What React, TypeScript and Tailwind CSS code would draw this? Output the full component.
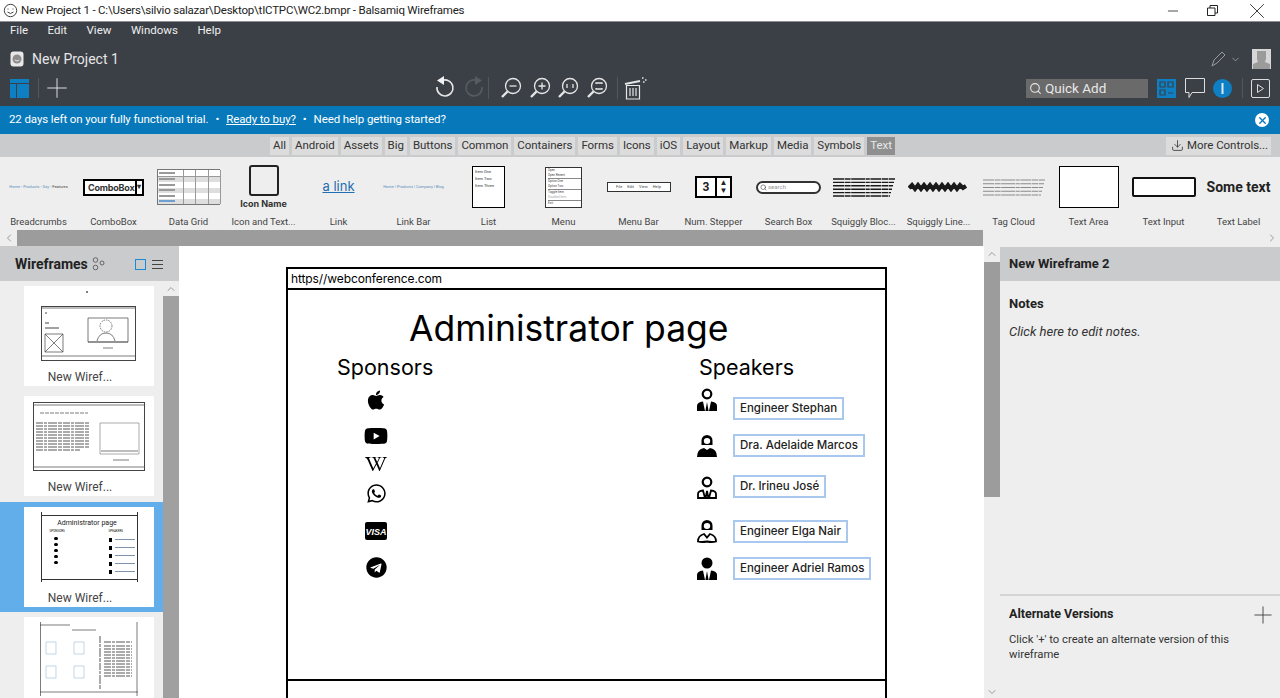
import React from 'react';
import { FaApple, FaYoutube, FaWikipediaW, FaWhatsapp, FaTelegram } from 'react-icons/fa';
import { ChevronLeft, ChevronRight, ChevronUp, ChevronDown, Download, Search, X, Minus, Plus } from 'lucide-react';

const menus = ['File', 'Edit', 'View', 'Windows', 'Help'];
const tabs = ['All', 'Android', 'Assets', 'Big', 'Buttons', 'Common', 'Containers', 'Forms', 'Icons', 'iOS', 'Layout', 'Markup', 'Media', 'Symbols'];

const Magnifier: React.FC<{ mark: React.ReactNode }> = ({ mark }) => (
  <svg width="22" height="22" viewBox="0 0 22 22" fill="none" stroke="#e6e6e6" strokeWidth="1.3">
    <circle cx="13" cy="9" r="7.5" />
    <path d="M7.5 14.5 2 20" strokeWidth="2.4" />
    {mark}
  </svg>
);

const Bars: React.FC<{ rows: number; w: number; h: number; color?: string; width?: number }> = ({ rows, w, h, color = '#555', width = 1.2 }) => (
  <svg width={w} height={h}>
    {Array.from({ length: rows }).map((_, i) => (
      <line key={i} x1="0" x2={w - (i * 13) % 12} y1={1 + (i * (h - 2)) / Math.max(rows - 1, 1)} y2={1 + (i * (h - 2)) / Math.max(rows - 1, 1)} stroke={color} strokeWidth={width} strokeDasharray="11 .6 6 .6 14 .6 4 .6" />
    ))}
  </svg>
);

const library: { label: string; preview: React.ReactNode }[] = [
  { label: 'Breadcrumbs', preview: <span className="text-[4px] text-[#5b8fc0] whitespace-nowrap">Home › Products › Xay › <span className="text-[#444]">Features</span></span> },
  {
    label: 'ComboBox',
    preview: (
      <div className="flex h-[17px] w-[61px] items-center border-2 border-black bg-white text-[9px] font-bold text-[#333]">
        <span className="flex-1 pl-[3px] leading-none [font-family:Inter,sans-serif] tracking-[-.2px]">ComboBox</span>
        <span className="flex h-full w-[11px] items-center justify-center border-l-2 border-black text-[8px]">▾</span>
      </div>
    ),
  },
  {
    label: 'Data Grid',
    preview: (
      <div className="grid h-[36px] w-[63px] grid-cols-[26px_12px_13px_12px] border border-[#777] bg-[#f8f8f8]">
        {Array.from({ length: 24 }).map((_, i) => (
          <div key={i} className={`flex items-center border-r border-[#999] ${i < 4 ? 'border-b' : ''} ${i % 8 < 4 ? 'bg-white' : 'bg-[#dedede]'}`}>
            {i % 4 === 0 && <span className={`ml-px h-[2px] w-[16px] ${i === 20 ? 'bg-[#6f9fce]' : 'bg-[#999]'}`} />}
          </div>
        ))}
      </div>
    ),
  },
  {
    label: 'Icon and Text...',
    preview: (
      <div className="flex flex-col items-center">
        <div className="h-[31px] w-[30px] rounded-[3px] border-2 border-[#222] bg-[#eeeeee]" />
        <span className="mt-[3px] text-[9px] leading-[10px] font-bold text-[#333] [font-family:Inter,sans-serif]">Icon Name</span>
      </div>
    ),
  },
  { label: 'Link', preview: <span className="text-[13px] text-[#1f6fb2] underline [font-family:Inter,sans-serif]">a link</span> },
  { label: 'Link Bar', preview: <span className="text-[4px] text-[#5b8fc0] whitespace-nowrap">Home | Products | Company | Blog</span> },
  {
    label: 'List',
    preview: (
      <div className="h-[42px] w-[33px] border border-black bg-white pl-[2px] pt-[1px] text-[4px] leading-[7px] text-[#333]">
        <div>Item One</div>
        <div>Item Two</div>
        <div>Item Three</div>
      </div>
    ),
  },
  {
    label: 'Menu',
    preview: (
      <div className="h-[41px] w-[37px] border border-[#333] bg-white pl-[2px] text-[3px] leading-[5px] text-[#444]">
        <div>Open</div>
        <div>Open Recent</div>
        <div className="border-t border-[#888]">Option One</div>
        <div>Option Two</div>
        <div className="border-t border-[#888]">Toggle Item</div>
        <div className="text-[#aaa]">Disabled Item</div>
        <div className="border-t border-[#888]">Exit</div>
      </div>
    ),
  },
  {
    label: 'Menu Bar',
    preview: (
      <div className="flex h-[10px] w-[64px] items-center justify-center gap-[5px] border border-[#333] bg-white text-[4px] text-[#444]">
        <span>File</span><span>Edit</span><span>View</span><span>Help</span>
      </div>
    ),
  },
  {
    label: 'Num. Stepper',
    preview: (
      <div className="flex h-[22px] w-[37px] items-center border-2 border-black bg-white text-[#222]">
        <span className="flex-1 text-center text-[12px] leading-none font-bold">3</span>
        <span className="flex h-full w-[15px] flex-col items-center justify-center border-l-2 border-black text-[8px] leading-[8px]">
          <span>▲</span><span>▼</span>
        </span>
      </div>
    ),
  },
  {
    label: 'Search Box',
    preview: (
      <div className="flex h-[13px] w-[65px] items-center rounded-full border-2 border-[#333] bg-white pl-[2px] text-[6px] text-[#999]">
        <Search size={7} strokeWidth={2} className="text-[#444]" />
        <span className="ml-[1px] leading-none">search</span>
      </div>
    ),
  },
  { label: 'Squiggly Bloc...', preview: <Bars rows={6} w={62} h={19} color="#1a1a1a" width={1.4} /> },
  {
    label: 'Squiggly Line...',
    preview: (
      <svg width="62" height="10" viewBox="0 0 62 10" fill="none" stroke="#1a1a1a">
        <path d="M1 6 4 3l3 4 3-4 3 4 3-4 3 4 3-4 3 4 3-4 3 4 3-4 3 4 3-4 3 4 3-4 3 4 3-4 3 3 3-2" strokeWidth="4" />
      </svg>
    ),
  },
  { label: 'Tag Cloud', preview: <Bars rows={5} w={62} h={17} color="#8a8a8a" width={1.1} /> },
  { label: 'Text Area', preview: <div className="h-[42px] w-[60px] border border-black bg-white" /> },
  { label: 'Text Input', preview: <div className="h-[20px] w-[64px] rounded-[2px] border-2 border-[#111] bg-white" /> },
  { label: 'Text Label', preview: <span className="text-[14px] font-bold text-[#222] whitespace-nowrap">Some text</span> },
];

const Thumb: React.FC<{ selected?: boolean; children: React.ReactNode; label?: boolean }> = ({ selected, children, label = true }) => (
  <div className={`${selected ? 'bg-[#62aeea] py-[5px]' : ''}`}>
    <div className="ml-[24px] flex h-[100px] w-[130px] flex-col items-center bg-white">
      <div className="flex h-[83px] w-full justify-center">{children}</div>
      {label && <span className="pr-[18px] text-[12px] leading-[16px] text-[#444]">New Wiref...</span>}
    </div>
  </div>
);

const speakerIcon = (head: 'ring' | 'solid' | 'hair' | 'hairOpen', body: 'tie' | 'tieOpen' | 'round' | 'roundOpen') => (
  <svg width="20" height="24" viewBox="0 0 20 24">
    {head === 'hair' || head === 'hairOpen' ? (
      <path d="M4.5 11V6.5a5.5 5.5 0 0 1 11 0V11z" fill="#000" />
    ) : (
      <circle cx="10" cy="6" r={head === 'solid' ? 5.5 : 4.3} fill={head === 'solid' ? '#000' : '#fff'} stroke="#000" strokeWidth={head === 'solid' ? 0 : 2.2} />
    )}
    {(head === 'hair' || head === 'hairOpen') && <ellipse cx="10" cy="7" rx="3.2" ry="3" fill="#fff" />}
    {body === 'tie' && <path d="M0 23v-5q0-4 6-4.5L8 23zM20 23v-5q0-4-6-4.5L12 23zM10 14l1.6 9H8.4z" fill="#000" />}
    {body === 'tieOpen' && <path d="M1 22v-4q0-3 5-3.5L8 22zM19 22v-4q0-3-5-3.5L12 22zM10 15l1.4 7H8.6z" fill="#fff" stroke="#000" strokeWidth="1.8" />}
    {body === 'round' && <path d="M0 23q0-8 7-9l3 2 3-2q7 1 7 9z" fill="#000" />}
    {body === 'roundOpen' && <path d="M1 22.5q0-6 6-7.5l3 3.5 3-3.5q6 1.5 6 7.5q-4 1-9 0q-5 1-9 0z" fill="#fff" stroke="#000" strokeWidth="1.8" />}
  </svg>
);

const speakers = [
  { name: 'Engineer Stephan', icon: speakerIcon('ring', 'tie'), row: 'mt-[7px]', icn: '', box: 'mt-[9px]' },
  { name: 'Dra. Adelaide Marcos', icon: speakerIcon('hair', 'round'), row: 'mt-[14px]', icn: '', box: '' },
  { name: 'Dr. Irineu José', icon: speakerIcon('ring', 'tieOpen'), row: 'mt-[18px]', icn: 'mt-px', box: '' },
  { name: 'Engineer Elga Nair', icon: speakerIcon('hairOpen', 'roundOpen'), row: 'mt-[20px]', icn: '', box: 'mt-px' },
  { name: 'Engineer Adriel Ramos', icon: speakerIcon('solid', 'tie'), row: 'mt-[14px]', icn: '', box: '' },
];

export default function App() {
  return (
    <div className="flex h-[698px] w-[1280px] flex-col overflow-hidden bg-white [font-family:Roboto,sans-serif]">
      {/* title bar */}
      <div className="flex h-[22px] shrink-0 items-center border-b border-[#8f8f8f] pl-[3px] text-[11.5px] tracking-[-.2px] text-[#222]">
        <svg width="15" height="15" viewBox="0 0 15 15" fill="none" stroke="#444" className="mr-[3px]">
          <circle cx="7.5" cy="7.5" r="6.2" />
          <path d="M4.5 9q3 3 6 0M5 5.5v1M10 5.5v1" />
        </svg>
        <span>New Project 1 - C:\Users\silvio salazar\Desktop\tICTPC\WC2.bmpr - Balsamiq Wireframes</span>
        <div className="ml-auto flex items-center text-[#222]">
          <Minus size={16} strokeWidth={1.2} className="mr-[26px]" />
          <svg width="11" height="11" viewBox="0 0 11 11" fill="none" stroke="#222" className="mr-[26px]">
            <path d="M.5 3h7.5v7.5H.5zM3 3V.5h7.5V8H8" />
          </svg>
          <X size={26} strokeWidth={.8} className="mr-[10px]" />
        </div>
      </div>

      {/* dark header */}
      <div className="flex h-[84px] shrink-0 flex-col bg-[#3b4046] text-[#eeeeee]">
        <div className="flex h-[18px] items-center gap-[19.5px] pl-[10px] text-[11.5px]">
          {menus.map(m => <span key={m}>{m}</span>)}
        </div>
        <div className="mt-[9px] flex h-[20px] items-center pl-[10px] pr-[9px]">
          <svg width="14" height="16" viewBox="0 0 14 16" className="mr-[8px]">
            <rect x="0.5" y="0.5" width="13" height="15" rx="3" fill="#e8e8e8" />
            <circle cx="7" cy="8" r="4.5" fill="#8d8d8d" />
            <path d="M4.8 9q2.2 2 4.4 0" stroke="#e8e8e8" fill="none" />
          </svg>
          <span className="text-[14px] text-[#e6e6e6]">New Project 1</span>
          <svg width="18" height="18" viewBox="0 0 18 18" fill="none" stroke="#9a9a9a" className="ml-auto">
            <path d="M2 16l2-6 8-8 3 3-8 8z" />
          </svg>
          <ChevronDown size={11} className="ml-[2px] mr-[11px] text-[#9a9a9a]" />
          <svg width="19" height="20" viewBox="0 0 19 20">
            <rect width="19" height="20" fill="#d6d6d6" />
            <path d="M5 2h9v8l-1 3 5 2v5H1v-5l5-2-1-3z" fill="#9b9b9b" />
          </svg>
        </div>
        <div className="mt-[2px] flex h-[34px] items-center pl-[10px]">
          <svg width="19" height="19" viewBox="0 0 19 19">
            <rect width="19" height="19" fill="#0f7fc4" />
            <path d="M0 4.5h19M6.5 4.5V19" stroke="#3b4046" strokeWidth="1" />
          </svg>
          <span className="ml-[9px] h-[20px] w-px bg-[#52575c]" />
          <Plus size={32} strokeWidth={.75} className="ml-[2px] text-[#dddddd]" />
          <svg width="22" height="24" viewBox="0 0 22 24" fill="none" stroke="#e6e6e6" strokeWidth="1.6" className="ml-[361px]">
            <path d="M8 4.5a8 8 0 1 1-5 6.5" />
            <path d="M10 0v9L3 4.5z" fill="#f2f2f2" stroke="none" />
          </svg>
          <svg width="22" height="24" viewBox="0 0 22 24" fill="none" stroke="#565b60" strokeWidth="1.6" className="ml-[7px]">
            <path d="M14 4.5a8 8 0 1 0 5 6.5" />
            <path d="M12 0v9l7-4.5z" fill="#565b60" stroke="none" />
          </svg>
          <span className="ml-[3px] h-[22px] w-px bg-[#52575c]" />
          <span className="ml-[11px]"><Magnifier mark={<path d="M9.5 9h7" />} /></span>
          <span className="ml-[7px]"><Magnifier mark={<path d="M9.5 9h7M13 5.5v7" />} /></span>
          <span className="ml-[6px]"><Magnifier mark={<path d="M10 11V7M13 8.5h.1M13 10.5h.1M16 11V7" />} /></span>
          <span className="ml-[7px]"><Magnifier mark={<path d="M10 7V6h6v1M10 11v1h6v-1" />} /></span>
          <span className="ml-[9px] h-[22px] w-px bg-[#52575c]" />
          <svg width="24" height="24" viewBox="0 0 24 24" fill="none" stroke="#e6e6e6" strokeWidth="1.2" className="ml-[5px]">
            <path d="M2 8 17 5" strokeWidth="2.2" />
            <path d="M3.5 9.5h13V23h-13zM7 12v8M10 12v8M13 12v8" />
            <path d="M19 2h1.5M22 4h1.5M20 6h1.5" strokeWidth="1.4" />
          </svg>
          <div className="ml-auto flex items-center pr-[10px]">
            <div className="flex h-[19px] w-[122px] items-center bg-[#6a6a6a] pl-[3px] text-[13.5px] text-[#e8e8e8]">
              <Search size={13} strokeWidth={2} className="mr-[3px]" />
              Quick Add
            </div>
            <svg width="19" height="19" viewBox="0 0 19 19" className="ml-[9px]">
              <rect width="19" height="19" fill="#0f7fc4" />
              <path d="M3 3h5v5H3zM11 3h5v5h-5zM3 11h5v5H3zM11 14h5" fill="none" stroke="#3b4046" strokeWidth="1.2" />
            </svg>
            <svg width="20" height="20" viewBox="0 0 20 20" fill="none" stroke="#dddddd" className="ml-[9px]">
              <path d="M.5.5h19v14H7l-3 5v-5H.5z" />
            </svg>
            <svg width="19" height="19" viewBox="0 0 19 19" className="ml-[8px]">
              <circle cx="9.5" cy="9.5" r="9.5" fill="#0f7fc4" />
              <rect x="8.5" y="4" width="2" height="11" fill="#dbeaf5" />
            </svg>
            <span className="ml-[10px] h-[20px] w-px bg-[#52575c]" />
            <svg width="19" height="19" viewBox="0 0 19 19" fill="none" stroke="#dddddd" className="ml-[8px]">
              <rect x=".5" y=".5" width="18" height="18" rx="1.5" />
              <path d="M6.5 5.5v8l6-4z" />
            </svg>
          </div>
        </div>
      </div>

      {/* trial banner */}
      <div className="flex h-[28px] shrink-0 items-center bg-[#0779bb] pl-[9px] pr-[11px] text-[11.5px] tracking-[-.1px] text-white">
        <span>22 days left on your fully functional trial.</span>
        <span className="mx-[7px]">•</span>
        <span className="underline">Ready to buy?</span>
        <span className="mx-[7px]">•</span>
        <span>Need help getting started?</span>
        <div className="ml-auto flex h-[14px] w-[14px] items-center justify-center rounded-full bg-white">
          <X size={11} strokeWidth={3} className="text-[#0779bb]" />
        </div>
      </div>

      {/* filter tabs */}
      <div className="flex h-[23px] shrink-0 items-center bg-[#c9cbcc] pl-[270px] pr-[9px] text-[11.5px] tracking-[-.04px] text-[#333]">
        <div className="flex gap-[3px]">
          {tabs.map(t => (
            <span key={t} className="flex h-[18px] items-center bg-[#dcdcdc] px-[3px]">{t}</span>
          ))}
          <span className="flex h-[18px] items-center bg-[#8f8f8f] px-[3px] text-[#e8e8e8]">Text</span>
        </div>
        <div className="ml-auto flex h-[18px] w-[105px] items-center bg-[#dcdcdc] pl-[5px] text-[#333] whitespace-nowrap">
          <Download size={13} strokeWidth={1.5} className="mr-[3px] shrink-0" />
          More Controls...
        </div>
      </div>

      {/* UI library strip */}
      <div className="grid h-[73px] shrink-0 grid-cols-[repeat(17,75px)] bg-[#eeeeee] pl-px">
        {library.map(item => (
          <div key={item.label} className="flex flex-col items-center">
            <div className="flex h-[57px] items-center justify-center pt-[3px]">{item.preview}</div>
            <span className="mt-px text-[9.5px] leading-[14px] whitespace-nowrap text-[#444]">{item.label}</span>
          </div>
        ))}
      </div>

      {/* horizontal scrollbar */}
      <div className="flex h-[16px] shrink-0 items-center bg-[#eeeeee]">
        <ChevronLeft size={12} className="ml-[3px] mr-[2px] text-[#9a9a9a]" />
        <div className="h-full w-[966px] bg-[#9c9c9c]" />
        <ChevronRight size={12} className="ml-auto mr-[2px] text-[#9a9a9a]" />
      </div>

      {/* workspace */}
      <div className="flex min-h-0 flex-1">
        {/* wireframes panel */}
        <div className="flex w-[179px] shrink-0 flex-col">
          <div className="flex h-[35px] shrink-0 items-center bg-[#c9cbcc] pl-[15px] pt-px text-[#222]">
            <span className="w-[72px] text-[14px] font-bold whitespace-nowrap">Wireframes</span>
            <svg width="14" height="14" viewBox="0 0 14 14" fill="none" stroke="#666" className="ml-[5px]">
              <circle cx="3.5" cy="3" r="2.3" /><circle cx="3.5" cy="10.5" r="2.3" /><circle cx="10" cy="6" r="2" />
            </svg>
            <span className="ml-[29px] h-[11px] w-[11px] border border-[#1a8ad4]" />
            <div className="ml-[6px] flex w-[11px] flex-col gap-[3px]">
              <span className="h-px bg-[#444]" /><span className="h-px bg-[#444]" /><span className="h-px bg-[#444]" />
            </div>
          </div>
          <div className="flex min-h-0 flex-1">
            <div className="flex w-[163px] flex-col overflow-hidden bg-[#eeeeee] pt-[5px]">
              <Thumb>
                <svg width="96" height="76" viewBox="0 -20 96 76" fill="none" stroke="#444" strokeWidth=".7">
                  <circle cx="46" cy="-14" r="1" fill="#555" stroke="none" />
                  <rect x=".5" y=".5" width="94" height="54" strokeWidth="1" />
                  <path d="M0 2h94M0 50h94M4 28h18v18H4zM4 28l18 18M22 28 4 46M47 12h40v24H47z" />
                  <path d="M4 7h2M4 17h4M4 22h14" strokeWidth="1" />
                  <circle cx="65" cy="20" r="6" strokeDasharray="1.5 1" />
                  <path d="M56 35q2-8 9-8t9 8M47 36h40M62 42h10" />
                </svg>
              </Thumb>
              <div className="mt-[10px]">
                <Thumb>
                  <svg width="112" height="70" viewBox="0 0 112 70" fill="none" stroke="#444" strokeWidth=".7" className="mt-[6px]">
                    <rect x=".5" y=".5" width="111" height="68" strokeWidth="1" />
                    <path d="M0 3h112M0 65h112" />
                    <path d="M7 11h48" strokeDasharray="4 1" />
                    <path d="M3 21h54M3 24h54M3 27h54M3 30h54M3 33h54M3 36h54M3 39h54M3 42h54M3 45h54M3 48h44" strokeDasharray="7 1 3 1 9 1 4 1" strokeWidth=".9" />
                    <path d="M67 21h39v31H67z" stroke="#888" />
                    <path d="M68 49h37M80 58h16" />
                  </svg>
                </Thumb>
              </div>
              <div className="mt-[6px]">
                <Thumb selected>
                  <div className="mt-[5px] flex h-[70px] w-[97px] flex-col border-x border-[#333]">
                    <div className="mt-[3px] h-px bg-[#333]" />
                    <div className="mt-[3px] pr-[4px] text-center text-[7px] leading-[9px] text-[#222]">Administrator page</div>
                    <div className="mt-[1px] flex justify-between pl-[8px] pr-[2px]">
                      <div className="flex flex-col gap-[3px] text-[3px]">
                        <span>SPONSORS</span>
                        {[0, 1, 2, 3, 4].map(i => <span key={i} className="ml-[4px] h-[3px] w-[4px] rounded-full bg-black" />)}
                      </div>
                      <div className="flex flex-col gap-[4px] text-[3px]">
                        <span>SPEAKERS</span>
                        {[0, 1, 2, 3, 4].map(i => <span key={i} className="flex items-center gap-[3px]"><span className="h-[4px] w-[3px] bg-black" /><span className="h-px w-[20px] bg-[#7f93ad]" /></span>)}
                      </div>
                    </div>
                    <div className="mt-auto mb-[2px] h-px bg-[#333]" />
                  </div>
                </Thumb>
              </div>
              <div className="mt-[5px]">
                <Thumb label={false}>
                  <svg width="98" height="76" viewBox="0 0 98 76" fill="none" stroke="#444" strokeWidth=".7" className="mt-[5px]">
                    <path d="M.5 0v74M97 0v74M0 3h30M0 70h98M32 8h24" />
                    <path d="M6 20h10v12H6zM34 20h10v12H34zM6 44h10v12H6zM34 44h10v12H34z" stroke="#a9c4de" />
                    <path d="M60 14v54M64 20h28M64 24h28M64 27h28M64 30h28M64 33h28M64 36h28M64 39h28M64 42h28M64 45h28M64 48h28M64 51h28M64 54h28" strokeDasharray="7 1 3 1 9 1 4 1" strokeWidth=".9" />
                  </svg>
                </Thumb>
              </div>
            </div>
            <div className="flex w-[16px] shrink-0 flex-col items-center bg-[#a0a0a0]">
              <div className="flex h-[15px] w-full items-center justify-center bg-[#eeeeee]">
                <ChevronUp size={12} className="text-[#9a9a9a]" />
              </div>
            </div>
          </div>
        </div>

        {/* canvas */}
        <div className="min-w-0 flex-1 overflow-hidden bg-white pl-[107px] pt-[21px]">
          <div className="flex h-[460px] w-[601px] flex-col border-x-2 border-t-2 border-black text-black [font-family:Inter,sans-serif]">
            <div className="flex h-[21px] shrink-0 items-center border-b-2 border-black pl-[3px] text-[12px] tracking-[-.1px]">
              https//webconference.com
            </div>
            <div className="h-[391px] shrink-0 border-b-2 border-black">
              <div className="mt-[18px] pl-[121px] text-[35.5px] leading-[42px] whitespace-nowrap">Administrator page</div>
              <div className="mt-[3px] flex">
                <div className="w-[411px] pl-[49px]">
                  <div className="text-[21.5px] leading-[28px]">Sponsors</div>
                  <div className="ml-[27px] flex w-[24px] flex-col items-center text-black">
                    <FaApple size={22} className="mt-[8px]" />
                    <FaYoutube size={24} className="mt-[13px]" />
                    <FaWikipediaW size={22} className="mt-[5px]" />
                    <FaWhatsapp size={21} className="mt-[8px]" />
                    <svg width="22" height="18" viewBox="0 0 22 18" className="mt-[18px]">
                      <rect width="22" height="18" rx="2" fill="#000" />
                      <text x="11" y="12.5" textAnchor="middle" fontSize="9" fontWeight="900" fontStyle="italic" fill="#fff" fontFamily="Liberation Sans, sans-serif">VISA</text>
                    </svg>
                    <FaTelegram size={21} className="mt-[17px]" />
                  </div>
                </div>
                <div className="flex-1">
                  <div className="text-[21.5px] leading-[28px]">Speakers</div>
                  <div className="flex flex-col">
                    {speakers.map(s => (
                      <div key={s.name} className={`-ml-[2px] flex items-start ${s.row}`}>
                        <div className={`h-[23px] w-[36px] shrink-0 ${s.icn}`}>{s.icon}</div>
                        <div className={`flex h-[23px] items-center border-2 border-[#a9c8ee] px-[5px] text-[11.5px] font-medium whitespace-nowrap text-[#222] ${s.box}`}>
                          {s.name}
                        </div>
                      </div>
                    ))}
                  </div>
                </div>
              </div>
            </div>
          </div>
        </div>

        {/* canvas scrollbar */}
        <div className="flex w-[16px] shrink-0 flex-col items-center bg-[#eeeeee]">
          <ChevronUp size={12} className="mt-[2px] text-[#9a9a9a]" />
          <div className="mt-[2px] h-[235px] w-full bg-[#9c9c9c]" />
          <ChevronDown size={12} className="mt-auto text-[#9a9a9a]" />
        </div>

        {/* inspector */}
        <div className="flex w-[280px] shrink-0 flex-col bg-[#eeeeee] text-[#222]">
          <div className="mt-px flex h-[34px] shrink-0 items-center bg-[#c9cbcc] pl-[9px] text-[13px] font-bold">New Wireframe 2</div>
          <div className="flex-1 pl-[9px] pt-[13px]">
            <div className="text-[13px] font-bold">Notes</div>
            <div className="mt-[8px] text-[13px] italic text-[#333]">Click here to edit notes.</div>
          </div>
          <div className="h-[104px] shrink-0 border-t-2 border-[#d4d4d4] pl-[9px] pr-[3px] pt-[10px]">
            <div className="flex h-[17px] items-center justify-between">
              <span className="text-[12.5px] font-bold">Alternate Versions</span>
              <Plus size={28} strokeWidth={.8} className="text-[#444]" />
            </div>
            <div className="mt-[9px] w-[240px] text-[11.25px] leading-[15px] text-[#333]">Click '+' to create an alternate version of this wireframe</div>
          </div>
        </div>
      </div>
    </div>
  );
}
